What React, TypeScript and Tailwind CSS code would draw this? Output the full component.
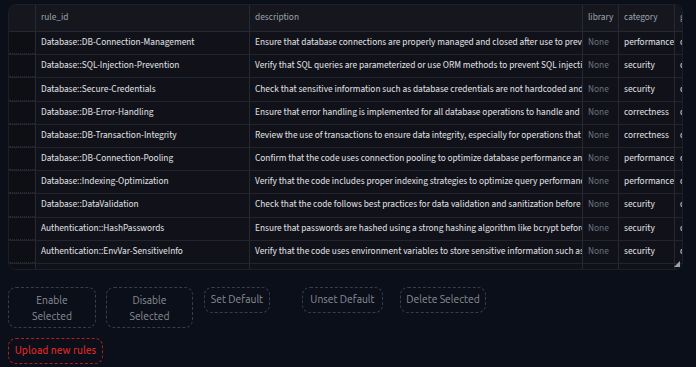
import React from 'react'

type Rule = {
  rule_id: string
  description: string
  library: string
  category: string
  group: string
}

const RULES: Rule[] = [
  { rule_id: 'Database::DB-Connection-Management', description: 'Ensure that database connections are properly managed and closed after use to prevent resource leaks.', library: 'None', category: 'performance', group: 'code' },
  { rule_id: 'Database::SQL-Injection-Prevention', description: 'Verify that SQL queries are parameterized or use ORM methods to prevent SQL injection attacks.', library: 'None', category: 'security', group: 'code' },
  { rule_id: 'Database::Secure-Credentials', description: 'Check that sensitive information such as database credentials are not hardcoded and are stored securely.', library: 'None', category: 'security', group: 'code' },
  { rule_id: 'Database::DB-Error-Handling', description: 'Ensure that error handling is implemented for all database operations to handle and log errors.', library: 'None', category: 'correctness', group: 'code' },
  { rule_id: 'Database::DB-Transaction-Integrity', description: 'Review the use of transactions to ensure data integrity, especially for operations that modify data.', library: 'None', category: 'correctness', group: 'code' },
  { rule_id: 'Database::DB-Connection-Pooling', description: 'Confirm that the code uses connection pooling to optimize database performance and resource usage.', library: 'None', category: 'performance', group: 'code' },
  { rule_id: 'Database::Indexing-Optimization', description: 'Verify that the code includes proper indexing strategies to optimize query performance.', library: 'None', category: 'performance', group: 'code' },
  { rule_id: 'Database::DataValidation', description: 'Check that the code follows best practices for data validation and sanitization before storing data.', library: 'None', category: 'security', group: 'code' },
  { rule_id: 'Authentication::HashPasswords', description: 'Ensure that passwords are hashed using a strong hashing algorithm like bcrypt before storing them.', library: 'None', category: 'security', group: 'code' },
  { rule_id: 'Authentication::EnvVar-SensitiveInfo', description: 'Verify that the code uses environment variables to store sensitive information such as API keys.', library: 'None', category: 'security', group: 'code' },
]

const cols = 'grid grid-cols-[26px_214px_333px_36px_56px_40px]'
const cell = 'flex h-full items-center overflow-hidden whitespace-nowrap px-[5px] border-l border-[#262932]'
const btn = 'rounded-lg border border-dashed border-[#3a3d46] whitespace-nowrap'

export default function App() {
  return (
    <div className="min-h-screen bg-[#0b0f19] px-[8px] pt-[4px]">
      {/* Table */}
      <div className="relative h-[266px] w-[675px] overflow-hidden rounded-lg border border-[#1c1f27] bg-[#111219] font-['Source_Sans_3','Lato',sans-serif] text-[9.3px]">
        <div className={`${cols} h-[27px] bg-[#16171e] text-[#9ca3af] border-b border-[#262932]`}>
          <div className="h-full" />
          <div className={cell}>rule_id</div>
          <div className={cell}>description</div>
          <div className={cell}>library</div>
          <div className={cell}>category</div>
          <div className={cell}>group</div>
        </div>
        {RULES.map((r) => (
          <div key={r.rule_id} className={`${cols} h-[23.2px] border-b border-[#22252d] text-[#e2e4e8]`}>
            <div className="h-full bg-[#0e0f15] border-b border-dotted border-[#2a2d36]" />
            <div className={cell}>{r.rule_id}</div>
            <div className={cell}>{r.description}</div>
            <div className={`${cell} text-[#6b7280]`}>{r.library}</div>
            <div className={cell}>{r.category}</div>
            <div className={cell}>{r.group}</div>
          </div>
        ))}
        <div className={`${cols} h-[23px]`}>
          <div className="h-full bg-[#0e0f15]" />
          <div className={cell} />
          <div className={cell} />
          <div className={cell} />
          <div className={cell} />
          <div className={cell} />
        </div>
        <svg className="absolute bottom-[2px] right-[2px]" width="6" height="6" viewBox="0 0 6 6">
          <path d="M6 0 L6 6 L0 6 Z" fill="#9ca3af" />
        </svg>
      </div>

      {/* Actions */}
      <div className="mt-[17px] flex items-start font-['Ubuntu','Noto_Sans',sans-serif] text-[10.3px] text-[#8b8f98]">
        <button className={`${btn} h-[41px] w-[88px] leading-[16px]`}>Enable<br />Selected</button>
        <button className={`${btn} ml-[10px] h-[41px] w-[87px] leading-[16px]`}>Disable<br />Selected</button>
        <button className={`${btn} ml-[11px] h-[26px] w-[66px]`}>Set Default</button>
        <button className={`${btn} ml-[32px] h-[26px] w-[81px]`}>Unset Default</button>
        <button className={`${btn} ml-[17px] h-[26px] w-[86px]`}>Delete Selected</button>
      </div>
      <button className="mt-[10px] h-[26px] w-[95px] whitespace-nowrap rounded-lg border border-dashed border-[#b91c1c] font-['Ubuntu','Noto_Sans',sans-serif] text-[10.3px] font-medium text-[#dc2626]">
        Upload new rules
      </button>
    </div>
  )
}
